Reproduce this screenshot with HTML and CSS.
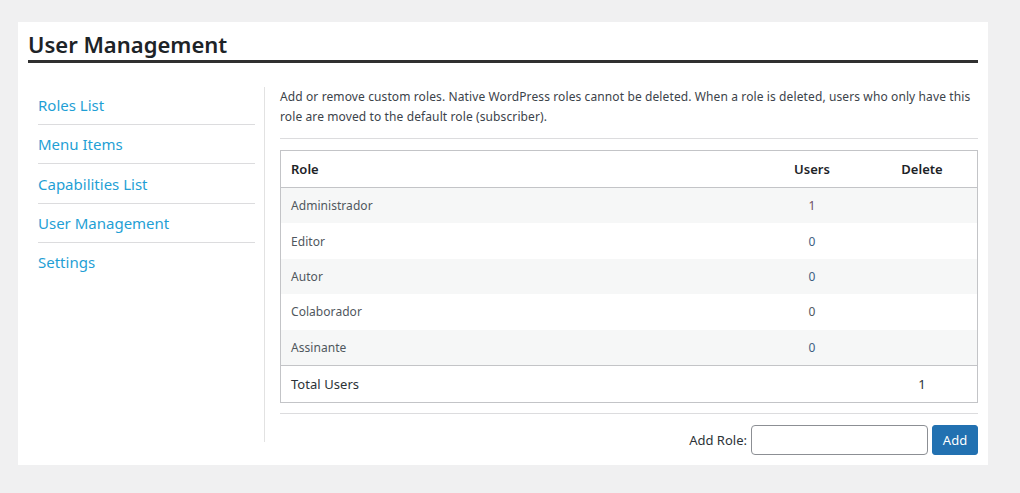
FILE: index.html
```html
<!DOCTYPE html>
<html>
<head>
<meta charset="utf-8">
<link rel="stylesheet" href="styles.css">
</head>
<body>
<div class="panel">
  <h1 class="title">User Management</h1>
  <div class="layout">
    <nav class="side">
      <a class="nav-item" href="#">Roles List</a>
      <a class="nav-item" href="#">Menu Items</a>
      <a class="nav-item" href="#">Capabilities List</a>
      <a class="nav-item" href="#">User Management</a>
      <a class="nav-item last" href="#">Settings</a>
    </nav>
    <main class="content">
      <p class="desc">Add or remove custom roles. Native WordPress roles cannot be deleted. When a role is deleted, users who only have this role are moved to the default role (subscriber).</p>
      <hr class="sep">
      <table class="roles">
        <thead>
          <tr><th class="c-role">Role</th><th class="c-users">Users</th><th class="c-del">Delete</th></tr>
        </thead>
        <tbody>
          <tr class="alt"><td class="c-role">Administrador</td><td class="c-users"><span class="n-visited">1</span></td><td class="c-del"></td></tr>
          <tr><td class="c-role">Editor</td><td class="c-users"><span class="n-link">0</span></td><td class="c-del"></td></tr>
          <tr class="alt"><td class="c-role">Autor</td><td class="c-users"><span class="n-link">0</span></td><td class="c-del"></td></tr>
          <tr><td class="c-role">Colaborador</td><td class="c-users"><span class="n-plain">0</span></td><td class="c-del"></td></tr>
          <tr class="alt"><td class="c-role">Assinante</td><td class="c-users"><span class="n-link">0</span></td><td class="c-del"></td></tr>
        </tbody>
        <tfoot>
          <tr><td class="c-role total">Total Users</td><td class="c-users"></td><td class="c-del total">1</td></tr>
        </tfoot>
      </table>
      <hr class="sep sep-bottom">
      <form class="add-row">
        <label class="add-label" for="role">Add Role:</label>
        <input class="add-input" id="role" type="text">
        <button class="add-btn" type="button">Add</button>
      </form>
    </main>
  </div>
</div>
</body>
</html>
```
FILE: styles.css
```css
html, body {
  margin: 0;
  padding: 0;
}
body {
  background: #f0f0f1;
  font-family: "Noto Sans", "Open Sans", sans-serif;
  color: #3c434a;
  padding: 22px 32px 28px 18px;
}
.panel {
  background: #fff;
  width: 970px;
  height: 443px;
  box-sizing: border-box;
  padding: 8px 10px 0 10px;
}
.title {
  margin: 0;
  font-size: 22px;
  font-weight: 600;
  color: #1d2327;
  line-height: 28px;
  padding-bottom: 2px;
  border-bottom: 3px solid #303030;
}
.layout {
  display: flex;
  margin-top: 24px;
}
.side {
  width: 237px;
  padding-left: 10px;
  box-sizing: border-box;
  border-right: 1px solid #e2e2e2;
  height: 355px;
  display: flex;
  flex-direction: column;
}
.nav-item {
  display: block;
  width: 217px;
  color: #1f9fd5;
  text-decoration: none;
  font-size: 15px;
  line-height: 20px;
  padding: 8px 0 9px;
  border-bottom: 1px solid #dcdcde;
}
.nav-item + .nav-item {
  padding-top: 9.34px;
}
.nav-item.last {
  border-bottom: none;
}
.content {
  flex: 1;
  padding-left: 15px;
}
.desc {
  margin: 0;
  font-size: 12px;
  letter-spacing: 0.11px;
  line-height: 20px;
  color: #3c434a;
}
.sep {
  border: 0;
  border-top: 1px solid #dcdcde;
  margin: 11px 0 11px;
  height: 0;
}
.sep-bottom {
  margin: 10px 0 11px;
}
.roles {
  width: 100%;
  border-collapse: collapse;
  border: 1px solid #c3c4c7;
  font-size: 12px;
}
.roles th {
  font-size: 13px;
  font-weight: 600;
  color: #1d2327;
  height: 36px;
  padding: 0 10px;
  border-bottom: 1px solid #c3c4c7;
}
.roles td {
  height: 35.4px;
  padding: 0 10px;
  color: #50575e;
  letter-spacing: 0.05px;
}
.roles th.c-role, .roles td.c-role {
  text-align: left;
}
.c-users {
  width: 90px;
  text-align: center;
}
.c-del {
  width: 90px;
  text-align: center;
}
.roles tbody tr.alt td {
  background: #f6f7f7;
}
.roles tfoot td {
  border-top: 1px solid #c3c4c7;
  height: 36px;
}
.roles td.total {
  font-size: 13px;
  color: #2c3338;
}
.n-visited { color: #6e4d63; }
.n-link { color: #3f5f82; }
.n-plain { color: #50575e; }
.add-row {
  display: flex;
  justify-content: flex-end;
  align-items: center;
  gap: 4px;
}
.add-label {
  font-size: 13px;
  font-weight: 400;
  color: #2c3338;
}
.add-input {
  width: 177px;
  height: 30px;
  box-sizing: border-box;
  border: 1px solid #8c8f94;
  border-radius: 4px;
  margin: 0;
}
.add-btn {
  height: 30px;
  width: 46px;
  border: 1px solid #2271b1;
  background: #2271b1;
  color: #fff;
  border-radius: 3px;
  font-family: inherit;
  font-size: 13px;
  padding: 0;
}
```
